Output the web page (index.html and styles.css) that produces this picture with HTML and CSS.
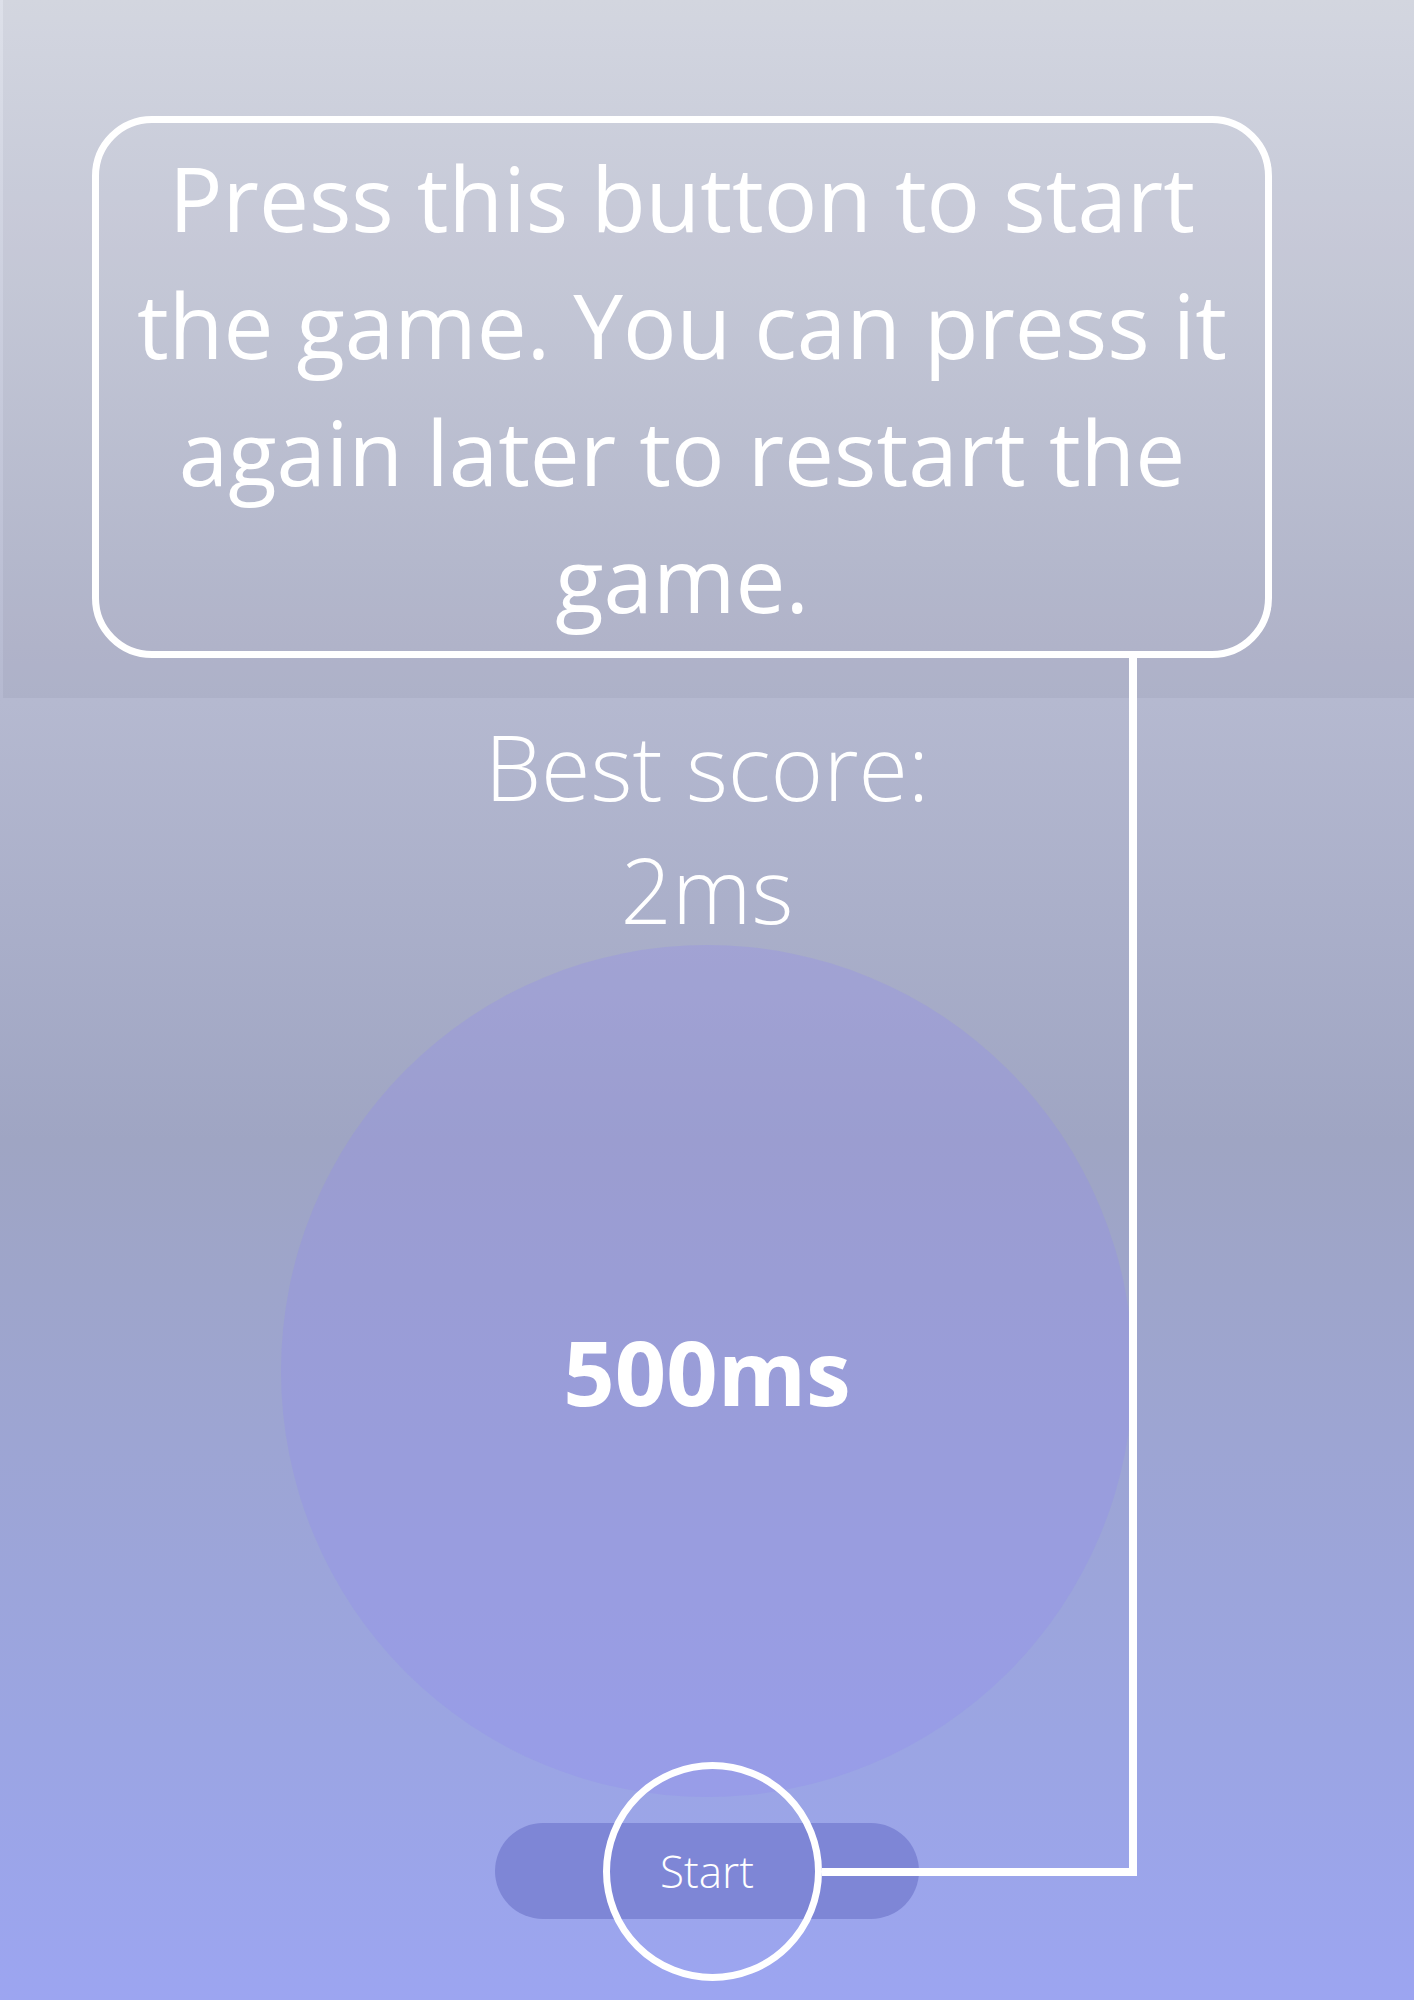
FILE: index.html
```html
<!DOCTYPE html>
<html lang="en">
<head>
<meta charset="utf-8">
<title>Reaction game</title>
<link rel="stylesheet" href="styles.css">
</head>
<body>
<main class="game">
  <div class="best">
    <div class="best-label">Best score:</div>
    <div class="best-value">2ms</div>
  </div>
  <div class="target"><span class="target-time">500ms</span></div>
  <button class="start" type="button">Start</button>
</main>

<div class="tour-backdrop"></div>
<div class="tour-tip">Press this button to start the game. You can press it again later to restart the game.</div>
<div class="tour-connector"></div>
<div class="tour-ring"></div>
</body>
</html>
```

FILE: styles.css
```css
* {
  box-sizing: border-box;
}

html, body {
  margin: 0;
  padding: 0;
}

body {
  position: relative;
  min-height: 2000px;
  font-family: "Open Sans", "Noto Sans", sans-serif;
  color: #ffffff;
  background: linear-gradient(to bottom,
    #dde0e9 0%,
    #b5b9d0 35%,
    #9fa5c3 57%,
    #9ba5e3 87%,
    #9ca5f1 100%);
  overflow: hidden;
}

.game {
  display: flex;
  flex-direction: column;
  align-items: center;
  padding-top: 705px;
}

.best {
  display: flex;
  flex-direction: column;
  align-items: center;
  font-size: 90px;
  font-weight: 300;
  line-height: 123px;
}

.target {
  width: 852px;
  height: 852px;
  margin-top: -6px;
  border-radius: 50%;
  background: rgba(145, 140, 240, 0.3);
  display: flex;
  align-items: center;
  justify-content: center;
}

.target-time {
  font-size: 90px;
  font-weight: 700;
  line-height: 1;
}

.start {
  margin-top: 26px;
  width: 424px;
  height: 96px;
  border: none;
  border-radius: 48px;
  background: #7e86d6;
  color: #ffffff;
  font-family: "Open Sans", "Noto Sans", sans-serif;
  font-size: 44px;
  font-weight: 300;
  padding: 0;
}

.tour-backdrop {
  position: absolute;
  left: 3px;
  top: 0;
  right: 0;
  height: 698px;
  background: rgba(10, 10, 30, 0.045);
}

.tour-tip {
  position: absolute;
  left: 92px;
  top: 116px;
  width: 1180px;
  border: 7px solid #ffffff;
  border-radius: 60px;
  padding: 11px 24px 9px;
  text-align: center;
  font-size: 89px;
  font-weight: 400;
  line-height: 127px;
}

.tour-connector {
  position: absolute;
  left: 822px;
  top: 658px;
  width: 315px;
  height: 1218px;
  border-right: 8px solid #ffffff;
  border-bottom: 8px solid #ffffff;
}

.tour-ring {
  position: absolute;
  left: 603px;
  top: 1762px;
  width: 219px;
  height: 219px;
  border: 7px solid #ffffff;
  border-radius: 50%;
}
```
